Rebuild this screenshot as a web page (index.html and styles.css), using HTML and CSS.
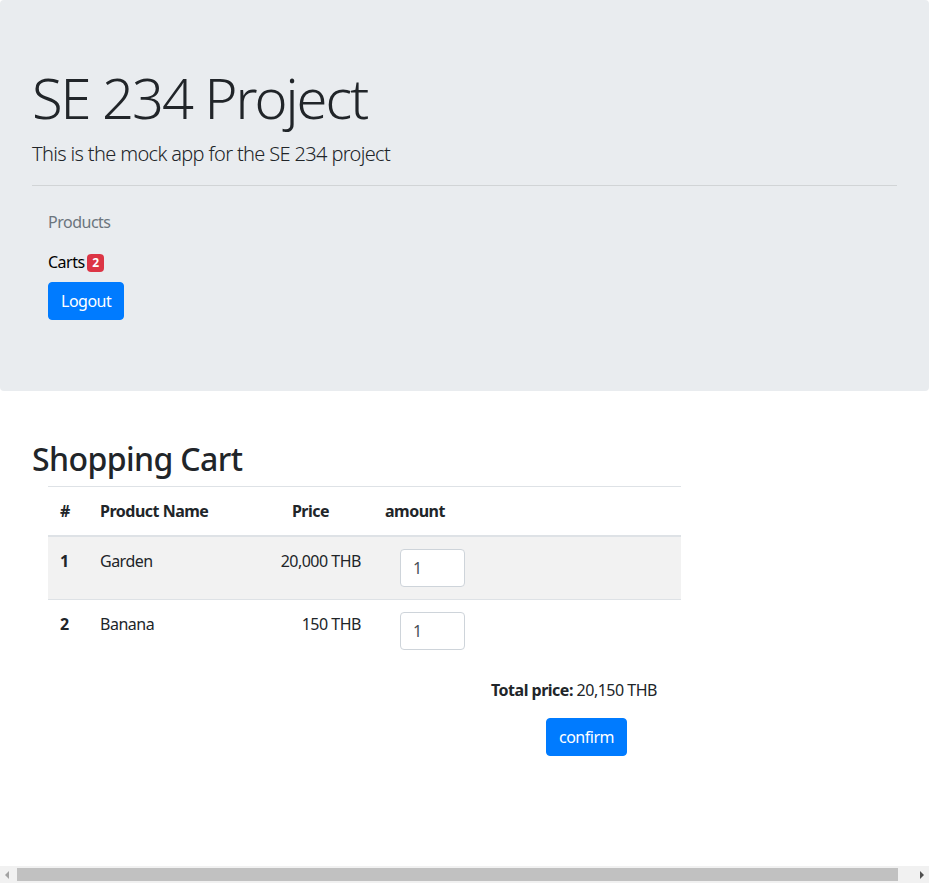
FILE: index.html
```html
<!DOCTYPE html>
<html lang="en">
<head>
<meta charset="utf-8">
<title>SE 234 Project</title>
<link rel="stylesheet" href="styles.css">
</head>
<body>
<header class="jumbotron">
  <h1 class="display">SE 234 Project</h1>
  <p class="lead">This is the mock app for the SE 234 project</p>
  <hr class="divider">
  <nav class="side-nav">
    <a class="nav-link muted" href="#">Products</a>
    <a class="nav-link" href="#">Carts <span class="badge">2</span></a>
    <button class="btn" type="button">Logout</button>
  </nav>
</header>
<main class="cart">
  <h2 class="cart-title">Shopping Cart</h2>
  <table class="cart-table">
    <thead>
      <tr>
        <th class="c-num">#</th>
        <th class="c-name">Product Name</th>
        <th class="c-price">Price</th>
        <th class="c-amount">amount</th>
      </tr>
    </thead>
    <tbody>
      <tr class="striped">
        <th class="c-num">1</th>
        <td>Garden</td>
        <td class="right">20,000 THB</td>
        <td><input class="qty" type="text" value="1"></td>
      </tr>
      <tr>
        <th class="c-num">2</th>
        <td>Banana</td>
        <td class="right">150 THB</td>
        <td><input class="qty" type="text" value="1"></td>
      </tr>
    </tbody>
  </table>
  <div class="summary">
    <p class="total"><strong>Total price:</strong> 20,150 THB</p>
    <button class="btn confirm" type="button">confirm</button>
  </div>
</main>
<div class="hscroll" aria-hidden="true">
  <span class="arrow left"></span>
  <span class="thumb"></span>
  <span class="arrow right"></span>
</div>
</body>
</html>
```
FILE: styles.css
```css
* { box-sizing: border-box; }
html, body { margin: 0; padding: 0; }
body {
  font-family: "Noto Sans", "Open Sans", "DejaVu Sans", sans-serif;
  font-size: 16px;
  line-height: 24px;
  letter-spacing: -0.5px;
  color: #212529;
  background: #fff;
  min-height: 883px;
}

.jumbotron {
  background: #e9ecef;
  border-radius: 4px;
  padding: 64px 32px 71px;
  height: 391px;
}
.display {
  margin: 0 0 8px;
  font-size: 56px;
  line-height: 67px;
  font-weight: 300;
  letter-spacing: -2px;
}
.lead {
  margin: 0;
  font-size: 20px;
  line-height: 30px;
  font-weight: 300;
  letter-spacing: -0.65px;
}
.divider {
  margin: 16px 0;
  border: 0;
  border-top: 1px solid rgba(0,0,0,.1);
  height: 0;
}
.side-nav {
  display: flex;
  flex-direction: column;
  align-items: flex-start;
  padding-left: 16px;
}
.nav-link {
  display: block;
  padding: 8px 0;
  color: #000;
  text-decoration: none;
  line-height: 24px;
}
.nav-link.muted { color: #6c757d; }
.badge {
  display: inline-block;
  margin-left: -1px;
  background: #dc3545;
  color: #fff;
  font-size: 12px;
  font-weight: 700;
  line-height: 1;
  letter-spacing: 0;
  padding: 3px 5px;
  border-radius: 4px;
  vertical-align: 1px;
}
.btn {
  font-family: inherit;
  font-size: 16px;
  line-height: 24px;
  letter-spacing: -0.5px;
  color: #fff;
  background: #007bff;
  border: 1px solid #007bff;
  border-radius: 4px;
  padding: 6px 12px;
  height: 38px;
}

.cart {
  padding: 49px 32px 0;
}
.cart-title {
  margin: 0 0 8px;
  font-size: 32px;
  line-height: 38px;
  font-weight: 500;
  letter-spacing: -0.6px;
}
.cart-table {
  margin-left: 16px;
  width: 633px;
  border-collapse: collapse;
}
.cart-table th, .cart-table td {
  padding: 12px;
  text-align: left;
  vertical-align: top;
  border-top: 1px solid #dee2e6;
  line-height: 24px;
}
.cart-table thead th {
  border-bottom: 2px solid #dee2e6;
}
.cart-table .c-num { width: 40px; font-weight: 700; }
.cart-table .c-name { width: 160px; }
.cart-table .c-price { width: 125px; text-align: center; }
.cart-table .right { text-align: right; }
.striped { background: #f2f2f2; }
.qty {
  display: block;
  margin-left: 15px;
  width: 65px;
  height: 38px;
  padding: 6px 12px;
  font-family: inherit;
  font-size: 16px;
  line-height: 24px;
  color: #495057;
  background: #fff;
  border: 1px solid #ced4da;
  border-radius: 4px;
}

.summary {
  margin-left: 16px;
  width: 633px;
  padding-top: 16px;
  display: flex;
  flex-direction: column;
  align-items: flex-start;
}
.total {
  margin: 0 0 16px 443px;
  line-height: 24px;
}
.total strong { font-weight: 700; }
.confirm {
  margin-left: 498px;
}

.hscroll {
  position: fixed;
  left: 0;
  right: 0;
  bottom: 0;
  height: 17px;
  background: #f1f1f1;
  display: flex;
  align-items: center;
}
.hscroll .thumb {
  flex: 0 0 881px;
  height: 13px;
  background: #c1c1c1;
  margin: 0 0 0 8px;
}
.hscroll .arrow {
  width: 0;
  height: 0;
  border-top: 4px solid transparent;
  border-bottom: 4px solid transparent;
}
.hscroll .arrow.left {
  margin-left: 5px;
  border-right: 4px solid #a3a3a3;
}
.hscroll .arrow.right {
  margin-left: 22px;
  border-left: 4px solid #505050;
}
```
